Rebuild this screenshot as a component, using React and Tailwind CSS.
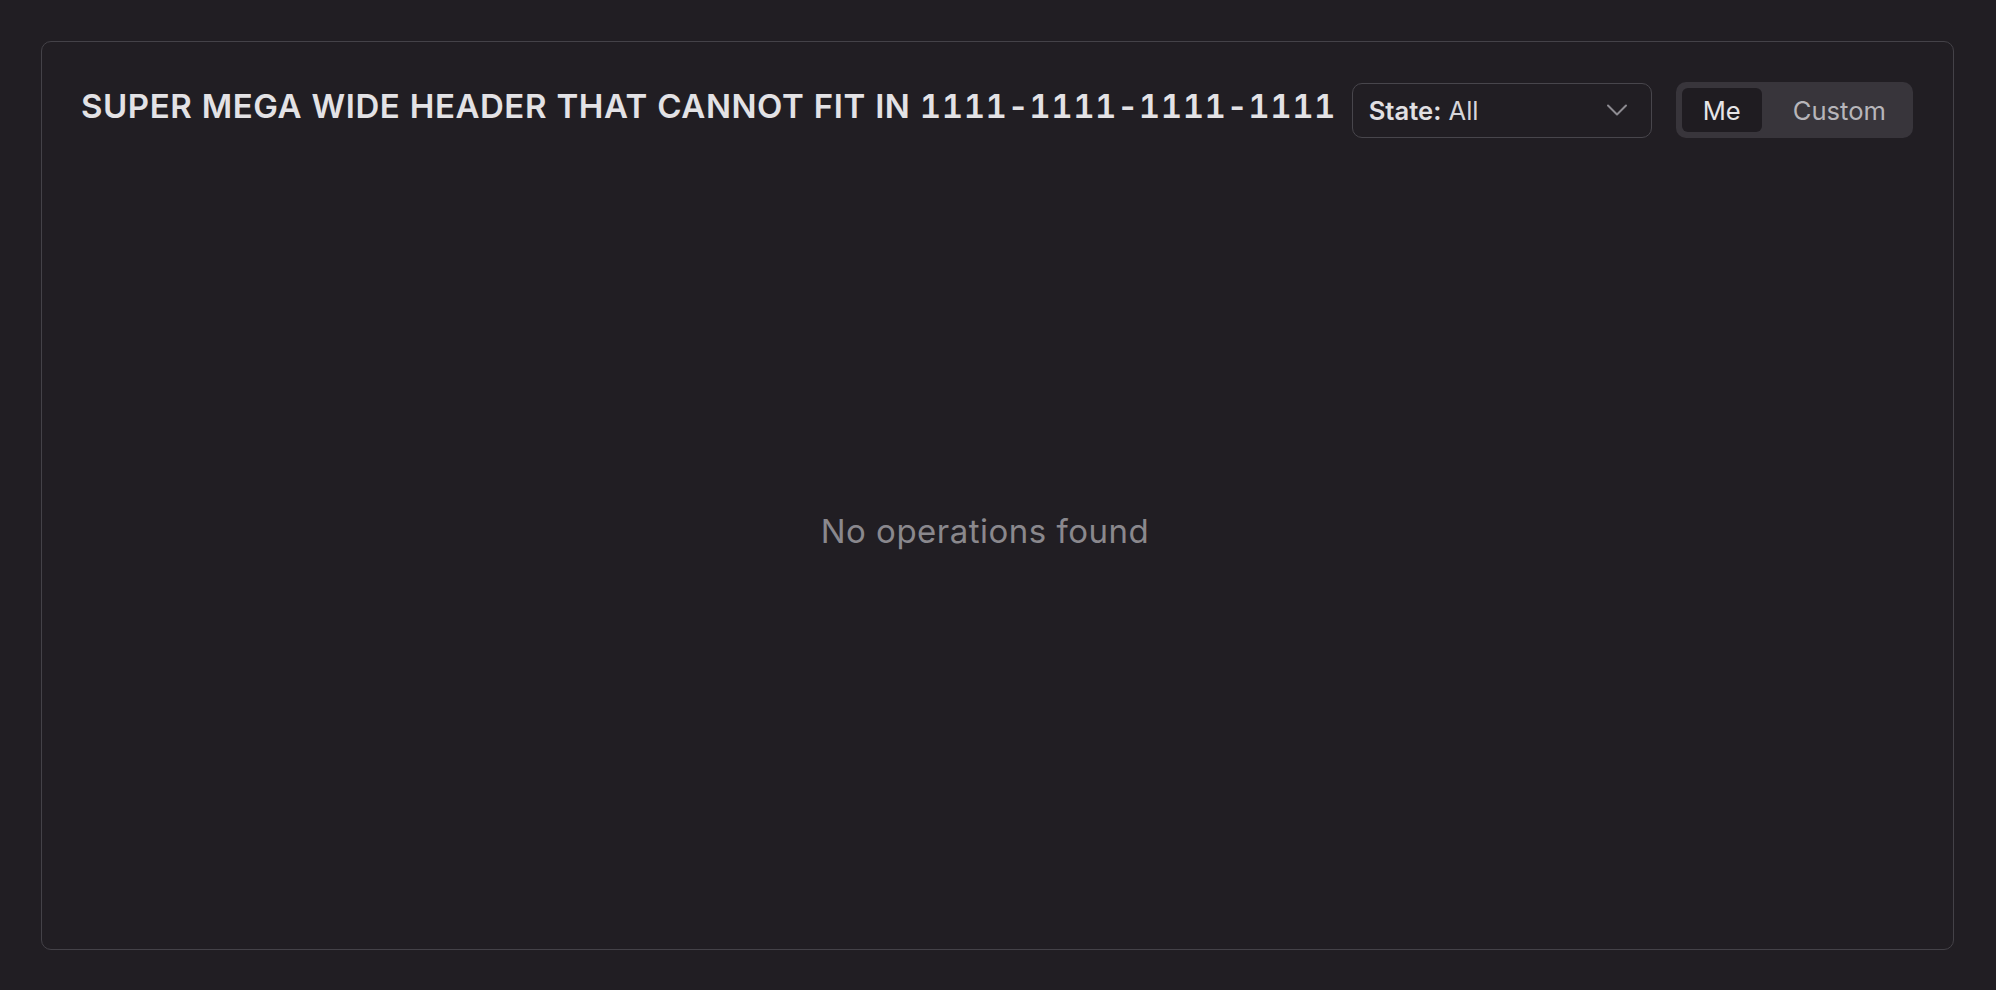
import React from "react";

export default function App() {
  return (
    <div
      className="w-full h-[990px] bg-[#211e23] pt-[41px] pb-10 pl-[41px] pr-[42px] flex"
      style={{ fontFamily: "Inter, 'Noto Sans', sans-serif" }}
    >
      <div className="flex-1 flex flex-col border border-[#444248] rounded-[10px] pt-[39px] pb-10 pl-[39px] pr-[40px] min-w-0">
        <div className="flex items-start">
          <h1 className="flex-1 min-w-0 mt-px text-[33px] leading-[48px] tracking-[0.55px] font-semibold text-[#e3e2e5] tabular-nums whitespace-nowrap pr-4">
            SUPER MEGA WIDE HEADER THAT CANNOT FIT IN 1111-1111-1111-1111
          </h1>
          <div className="flex items-center gap-6 shrink-0 mt-px">
            <button className="w-[300px] h-[55px] flex items-center justify-between border border-[#48464c] rounded-[10px] pl-4 pr-[23px] pt-[2px] text-[25.6px] leading-none">
              <span className="text-[#d6d5d9]">
                <span className="font-semibold text-[#e1e0e3]">State:</span> All
              </span>
              <svg width="22" height="14" viewBox="0 0 22 14" fill="none" className="-mt-[2px]">
                <path d="M2 2.5 L11 11.5 L20 2.5" stroke="#8d8b91" strokeWidth="2" strokeLinecap="round" strokeLinejoin="round" />
              </svg>
            </button>
            <div className="h-[56px] flex items-center gap-[10px] p-[6px] bg-[#38353b] rounded-[10px]">
              <button className="h-[44px] px-[21px] pt-[2px] rounded-[6px] bg-[#1f1c21] text-[25.6px] leading-none text-[#e6e5e8]">
                Me
              </button>
              <button className="h-[44px] px-[21px] pt-[2px] rounded-[6px] text-[25.6px] leading-none text-[#b7b5ba]">
                Custom
              </button>
            </div>
          </div>
        </div>
        <div className="flex-1 flex items-center justify-center mt-[14px] pr-6">
          <p className="text-[33px] leading-[48px] tracking-[0.5px] text-[#8a888d]">No operations found</p>
        </div>
      </div>
    </div>
  );
}
